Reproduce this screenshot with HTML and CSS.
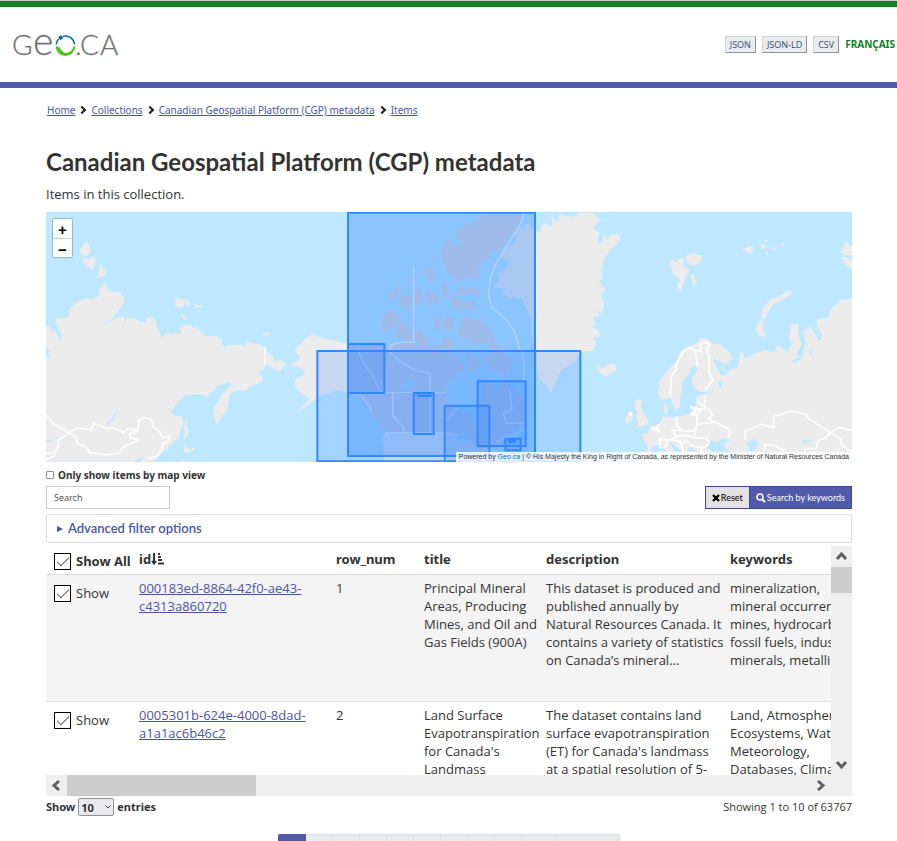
FILE: index.html
```html
<!DOCTYPE html>
<html lang="en">
<head>
<meta charset="utf-8">
<meta name="viewport" content="width=device-width, initial-scale=1">
<title>Canadian Geospatial Platform (CGP) metadata</title>
<link rel="stylesheet" href="styles.css">
</head>
<body>
<header class="banner">
  <a class="logo" href="#" aria-label="GEO.CA">
    <svg width="112" height="60" viewBox="0 -19 112 60">
      <g class="logo-text">
        <text x="-1" y="21" font-size="28">G</text>
        <text x="20" y="21" font-size="39">e</text>
        <text x="62" y="21" font-size="28">.</text>
        <text x="67" y="21" font-size="28">C</text>
        <text x="87" y="21" font-size="28">A</text>
      </g>
      <path d="M43.300 10.500A9.300 9.300 0 0 1 45.500 5M50 2.300A9.300 9.300 0 0 1 61.600 10.500" fill="none" stroke="#0b67a8" stroke-width="1.500"/>
      <circle cx="47.700" cy="3.700" r="2.100" fill="#0b67a8"/>
      <path d="M42.700 12A9.600 9.600 0 0 0 62.200 12.500L60.500 12.300A8 8 0 0 1 52 19Q48.500 17.500 46.500 13.500Z" fill="#4cc21f"/>
    </svg>
  </a>
  <nav class="formats" aria-label="Formats">
    <a class="format" href="#">JSON</a>
    <a class="format" href="#">JSON-LD</a>
    <a class="format" href="#">CSV</a>
    <a class="lang" href="#">FRANÇAIS</a>
  </nav>
</header>

<main class="page">
  <nav aria-label="Breadcrumb">
    <ol class="crumbs">
      <li><a href="#">Home</a></li>
      <li><a href="#">Collections</a></li>
      <li><a href="#">Canadian Geospatial Platform (CGP) metadata</a></li>
      <li><a href="#">Items</a></li>
    </ol>
  </nav>
  <h1>Canadian Geospatial Platform (CGP) metadata</h1>
  <p class="intro">Items in this collection.</p>

  <section class="map" aria-label="Map">
    <svg class="map-art" viewBox="0 0 806 250" preserveAspectRatio="xMidYMid slice">
      <!-- Siberia and the north Pacific -->
      <g transform="translate(0 -2) scale(.33333)">
        <path class="land" d="M0 345L12 350 16 362 26 364 36 377 42 392 47 388 46 368 36 358 40 347 29 340 28 327 62 322 71 318 68 300 80 287 103 271 126 264 135 269 160 257 158 242 166 226 176 219 185 229 182 237 195 246 223 248 235 266 230 287 208 314 184 342 208 324 234 318 236 342 240 324 266 325 282 335 301 338 299 325 315 322 330 331 333 352 346 381 354 379 356 368 381 372 392 367 400 373 408 364 400 356 411 345 434 345 437 354 455 352 470 372 480 379 508 377 526 387 530 404 539 419 541 406 586 405 601 414 600 397 640 404 656 415 677 437 689 454 707 450 718 462 700 485 678 473 659 461 652 481 633 486 651 501 650 515 614 529 597 542 580 540 557 545 548 561 549 575 545 597 521 629 511 646 503 616 505 588 517 572 532 548 558 522 548 514 530 524 516 527 502 540 492 558 458 553 418 556 396 577 374 606 386 617 408 619 410 645 401 677 370 710 348 730 322 755 0 755Z"/>
        <path class="land" d="M122 94L132 107 132 128 121 137 104 130 101 119 109 109ZM147 144L149 160 141 180 126 170 113 156 110 143 128 148 138 139ZM166 166L171 177 182 184 177 196 149 208 158 184 161 167ZM96 142L107 146 103 151ZM388 266L400 263 405 270 417 266 418 282 404 295 388 289ZM422 268L434 279 426 289 419 281ZM444 282L468 289 459 294 447 290ZM405 311L416 317 425 328 412 326ZM650 374L664 366 671 373 654 377ZM226 304L233 307 228 310ZM418 627L424 630 422 644 429 666 416 691 414 656ZM413 708L435 718 430 728 415 725ZM406 744L415 755H404Z"/>
        <path class="water" d="M211 599L213 606 203 630 183 645 178 641 196 630ZM0 412L9 421 8 432 15 438 6 440 0 430ZM0 690L21 690 18 694 0 695ZM284 742L293 745 282 755H260Z"/>
        <path class="border" d="M0 615L21 641 71 668 95 653 136 660 143 640 186 656 199 652 233 668 247 656 277 661 278 633 293 623 316 628 321 649 343 667 349 684 372 678 365 695 350 702 347 719 333 737 306 748M277 661L249 672 256 684 277 690 229 713 220 729 183 735 129 727 124 713 95 701 92 685 71 668 36 692 38 705 25 727 0 730M25 727L26 738 0 748"/>
        <path class="thin" d="M657 410V464M438 722l6-10"/>
      </g>
      <!-- Alaska, Canada, Greenland -->
      <g transform="translate(264 -2) scale(.33333)">
        <path class="land" d="M114 402L82 394 44 386 6 373-18 386-27 402-46 415-39 434-27 441-42 457-54 460-52 468-26 473-14 489-24 500-44 508-44 530-24 550 0 566-24 590-42 604-18 594 12 569 30 557 60 548 82 540 114 548Z"/>
        <path class="canada" d="M114 402L170 410 215 402 241 410 265 403 312 397 330 413 365 408 395 402 402 430 430 429 448 444 466 468 456 488 432 504 420 520 408 540 412 580 440 600 475 610 490 645 507 658 511 630 502 590 516 555 514 520 530 512 565 530 590 514 615 542 647 570 647 605 634 645 600 665 570 700 530 720 450 690 408 670 232 668 206 640 175 600 150 562 114 548Z"/>
        <path class="states" d="M228 668L408 670 455 678 485 692 500 712 545 715 560 738 540 755H222L220 712 214 680Z"/>
        <path class="canada" d="M440 66L470 38 492 47 508 20 530 8H642L610 70 583 103 568 120 550 128 530 148 518 150 512 170 500 180 512 190 500 208 480 200 470 212 452 205 440 218 430 200 412 190 408 170 398 160 399 142 390 128 400 118 400 95 425 92 440 104 455 104 448 88 430 78ZM345 165L371 182 368 190 380 205 366 215 350 212 356 196 338 190ZM296 205L306 220 286 226ZM265 225L278 236 262 246 268 256 240 275 230 262 244 244ZM282 248L305 258 308 272 298 300 282 285 264 289 268 270ZM310 246L334 230 330 246 344 272 318 290ZM350 243L387 249 384 262 390 284 368 280 358 290 347 262ZM391 205L414 230 416 248 410 266 396 250ZM446 228L470 236 498 232 512 246 503 258 480 250 460 256 443 250ZM430 240L440 262 448 275 474 278 498 270 500 299 462 296 432 300 422 290 426 262ZM223 303L246 304 270 315 266 339 250 350 232 370 222 360 210 358 218 330ZM258 350L279 333 298 347 300 360 330 355 340 375 367 386 352 400 340 414 322 396 302 390 290 398 280 380 260 385ZM369 320L380 322 392 315 399 340 388 348 390 366 376 358ZM407 318L430 320 432 345 424 366 414 356 404 366 402 340ZM376 136l8 8-8 8-6-6Z"/>
        <path class="canada" d="M447 329L468 318 480 322 490 330 518 322 520 340 543 356 536 370 553 372 553 403 572 408 580 420 596 438 616 458 600 462 610 482 588 476 594 504 570 496 560 484 536 471 528 452 505 445 520 436 550 430 540 410 523 396 500 404 481 395 470 380 456 388 442 376 450 352ZM400 380L416 382 436 398 428 410 415 422 394 408ZM466 425L486 432 500 435 520 466 500 470 486 490 470 462Z"/>
        <path class="land" d="M657 38L665 55 690 66 700 38 727 50 724 15 742 38 749 12 785 20 850 8V423L811 425 795 455 752 480 740 512 725 548 709 528 690 510 680 470 682 430 665 385 663 326 650 300 638 268 592 260 570 248 586 238 549 229 568 214 560 190 580 186 601 153 580 150 570 137 584 111 614 100 620 60Z"/>
        <path class="thin" d="M641 8Q642 30 612 73L580 125Q520 210 543 290L588 327Q623 370 624 407L640 435Q644 470 641 515M311 170V397H268L241 405V430L290 467 318 482 360 490V665M114 548H408M143 416L155 449 185 492 207 538 217 546M248 549V617L280 650 283 666M153 557L180 590 183 608M226 668H408L454 678 486 700M599 542L606 598 580 610 590 640H641M410 628L441 593M560 700L580 685 620 675 640 650"/>
        <path class="cutout" d="M270 530L300 508 319 520 286 540ZM220 447L238 440 249 450 224 460ZM432 680L463 668 485 683 470 695 454 685 449 695Z"/>
      </g>
      <!-- Greenland coast, Europe, western Russia -->
      <g transform="translate(534 -2) scale(.33333)">
        <path class="land" d="M-4 8L38 8 60 31 42 49 9 54 17 62 47 60 58 70 51 106 67 92 71 70 79 90 96 71 119 76 122 90 87 126 72 146 66 184 68 204 57 216 79 239 62 252 73 282 67 310 50 302 60 318 25 323 51 342 24 348 55 360 60 381 17 381 51 396 40 412 14 423-4 425Z"/>
        <path class="land" d="M51 461L62 466 57 478 71 471 91 460 108 462 109 480 78 500 60 491 52 477ZM266 152L283 149 287 160 300 143 312 147 308 168 331 180 316 200 304 246 290 225 301 209 278 190ZM316 137L343 129 367 137 361 157 342 168 322 158ZM339 192L351 218 340 227 331 199ZM487 122L501 109 517 108 522 120 510 131 501 122ZM553 85L563 92 555 97ZM544 100L563 109 554 118 542 110ZM577 112L590 116 578 124ZM600 106L609 96 611 110ZM560 121L566 135 556 132ZM531 132l8-3-2 6ZM632 240L634 252 609 269 590 280 571 292 557 325 543 326 545 304 560 280 575 264 596 261 620 244ZM539 329L553 335 548 355 558 381 537 379 527 357ZM798 95L816 112V136H790L781 126ZM779 142L795 140 816 150V180L800 168ZM164 575L174 568 187 571 182 591 190 610 205 629 204 644 170 654 174 636 166 614 176 609 164 596ZM143 612L157 607 157 632 137 641 134 628ZM251 585L261 580 265 608 253 608Z"/>
        <path class="land" d="M234 516L265 480 290 452 303 422 326 407 351 400 364 382 388 390 398 402 420 403 451 428 458 447 438 462 408 450 414 469 430 473 438 489 454 477 474 472 480 427 491 430 493 448 519 432 552 422 583 426 594 404 622 425 635 403 627 379 634 340 655 342 655 370 665 406 651 426 657 443 637 450 640 459 658 454 671 430 673 401 691 412 690 432 696 437 694 420 676 396 669 364 688 351 707 373 714 391 724 391 727 374 712 351 710 330 750 320 749 300 783 270 816 264V755H150L205 717 188 680 175 674 201 672 209 653 239 641 251 618 277 622 327 614 347 587 350 558 400 545 362 546 337 531 335 505 350 486 350 467 331 474 328 490 307 515 307 541 300 560 300 591 285 601 271 563 243 571 232 550 240 530Z"/>
        <path class="water" d="M398 440L419 462 427 479 443 490 424 497 415 483 407 462ZM413 513L429 520 419 537ZM395 536L406 540 400 545ZM380 714L391 692 412 697 424 686 449 690 430 705 436 718 458 725H398ZM498 697L524 687 535 700 526 720 512 724ZM666 690L709 692 681 698 668 702ZM216 710L234 704 260 725H210ZM267 695L289 710 307 725H286ZM320 722l12-10 22 13Z"/>
        <path class="border" d="M271 561L274 500 287 481 288 462 310 425 330 413 346 422 352 470M346 422L362 422 361 402 378 397 392 404 380 416 388 440 387 488 398 510 374 541M374 557L373 590 355 577M332 614L350 600 332 590 360 598 382 593 398 614 386 628 405 636 352 643 350 614 332 614M350 614L368 595M405 636L452 661 444 686M352 643L340 663 306 662 291 646 289 620M306 662L276 660 288 680 319 676 342 683 380 684 388 700 372 713 336 708 318 690 308 700 285 690 248 690 238 685 240 713M352 643L342 683M213 650L240 666 229 650 243 640M300 690L310 725M360 708L365 725M288 680L262 692 255 714M497 690L495 664 543 643 582 652 580 620 636 603 680 613 688 627 717 646 752 668 775 652 816 661M752 668L737 683 712 693 711 714 681 717 672 725M752 668L780 686 785 705 816 725M552 725L555 704 582 706 614 722"/>
        <circle cx="152" cy="612" r="7" fill="#fff"/>
      </g>
      <!-- Item extents -->
      <g transform="translate(264 -2) scale(.33333)" class="extents">
        <rect class="double" x="114" y="8" width="561" height="730"/>
        <rect x="22" y="423" width="789" height="331"/>
        <rect x="114" y="402" width="109" height="147"/>
        <rect x="311" y="549" width="60" height="123"/>
        <rect x="326" y="550" width="36" height="8"/>
        <rect x="404" y="587" width="134" height="180"/>
        <rect x="503" y="514" width="144" height="194"/>
        <rect x="586" y="686" width="46" height="35"/>
        <rect x="598" y="689" width="17" height="8"/>
      </g>
    </svg>
    <div class="zoom">
      <button type="button" aria-label="Zoom in">+</button>
      <button type="button" aria-label="Zoom out">−</button>
    </div>
    <p class="credit">Powered by <a href="#">Geo.ca</a> | © His Majesty the King in Right of Canada, as represented by the Minister of Natural Resources Canada</p>
  </section>

  <label class="only-map"><input type="checkbox"> Only show items by map view</label>
  <form class="search">
    <input type="text" placeholder="Search" aria-label="Search">
    <div class="actions">
      <button class="reset" type="reset"><svg width="8" height="8" viewBox="0 0 8 8"><path d="M1 1L7 7M7 1L1 7" stroke="#000" stroke-width="2.400"/></svg>Reset</button>
      <button class="submit" type="button"><svg width="10" height="10" viewBox="0 0 10 10" fill="none" stroke="#fff"><circle cx="4" cy="4" r="3" stroke-width="1.500"/><path d="M6 6L9 9" stroke-width="2"/></svg>Search by keywords</button>
    </div>
  </form>
  <details class="filters"><summary>Advanced filter options</summary></details>

  <section class="scroller">
    <div class="view">
      <table>
        <colgroup><col class="c-show"><col class="c-id"><col class="c-row"><col class="c-title"><col class="c-desc"><col class="c-key"></colgroup>
        <thead>
          <tr>
            <th><label class="pick"><input type="checkbox" checked>Show All</label></th>
            <th>id<svg class="sort" width="13" height="12" viewBox="0 0 13 12"><path d="M3 0V10M1 8L3 10.500 5 8" fill="none" stroke="#333" stroke-width="2"/><path d="M7 1h2M7 4h3M7 7h4M7 10.500h6" stroke="#333" stroke-width="2"/></svg></th>
            <th>row_num</th><th>title</th><th>description</th><th>keywords</th>
          </tr>
        </thead>
        <tbody>
          <tr>
            <td><label class="pick"><input type="checkbox" checked>Show</label></td>
            <td><a href="#">000183ed-8864-42f0-ae43-c4313a860720</a></td>
            <td>1</td>
            <td>Principal Mineral Areas, Producing Mines, and Oil and Gas Fields (900A)</td>
            <td class="desc">This dataset is produced and<br>published annually by<br>Natural Resources Canada. It<br>contains a variety of statistics<br>on Canada’s mineral...</td>
            <td>mineralization,<br>mineral occurrences,<br>mines, hydrocarbons,<br>fossil fuels, industrial<br>minerals, metallic</td>
          </tr>
          <tr>
            <td><label class="pick"><input type="checkbox" checked>Show</label></td>
            <td><a href="#">0005301b-624e-4000-8dad-a1a1ac6b46c2</a></td>
            <td>2</td>
            <td>Land Surface Evapotranspiration for Canada's Landmass</td>
            <td class="desc">The dataset contains land<br>surface evapotranspiration<br>(ET) for Canada's landmass<br>at a spatial resolution of 5-</td>
            <td>Land, Atmosphere,<br>Ecosystems, Water,<br>Meteorology,<br>Databases, Climate</td>
          </tr>
        </tbody>
      </table>
    </div>
    <div class="bar-v">
      <svg width="21" height="21" viewBox="0 0 21 21"><path d="M6 13L10.500 8 15 13"/></svg>
      <span class="thumb-v"></span>
      <svg class="end-v" width="21" height="21" viewBox="0 0 21 21"><path d="M6 8L10.500 13 15 8"/></svg>
    </div>
    <div class="bar-h">
      <svg width="21" height="21" viewBox="0 0 21 21"><path d="M13 6L8 10.500 13 15"/></svg>
      <span class="thumb-h"></span>
      <svg class="end-h" width="21" height="21" viewBox="0 0 21 21"><path d="M8 6L13 10.500 8 15"/></svg>
    </div>
  </section>

  <div class="table-foot">
    <label class="length">Show
      <span class="select"><select><option>10</option><option>25</option><option>50</option></select><svg width="6" height="4" viewBox="0 0 6 4"><path d="M.5.5L3 3 5.500.5" fill="none" stroke="#444"/></svg></span>
      entries</label>
    <span class="count">Showing 1 to 10 of 63767</span>
  </div>

  <nav class="pager" aria-label="Pages">
    <a class="current" href="#">1</a><a href="#">2</a><a href="#">3</a><a href="#">4</a><a href="#">5</a><a href="#">6</a><a href="#">7</a><a href="#">8</a><a href="#">9</a><a class="ten" href="#">10</a><a class="next" href="#">Next</a>
  </nav>
</main>
</body>
</html>
```
FILE: styles.css
```css
* { box-sizing: border-box; }

body {
  margin: 0;
  background: #fff;
  color: #333;
  font: 13px/18px "Noto Sans", sans-serif;
}

a { color: #4c55a5; }
button, input, select { font-family: inherit; color: inherit; margin: 0; }

.banner {
  display: flex;
  justify-content: space-between;
  align-items: center;
  height: 88px;
  padding: 0 2px 0 13px;
  border-bottom: 6px solid #5059aa;
  background: linear-gradient(#ccc 1px, #127f26 1px, #127f26 7px, #fff 7px);
}
.logo { display: block; margin-top: 8px; }
.logo svg { display: block; }
.logo-text {
  font-family: Lato, sans-serif;
  font-weight: 300;
  fill: #6f7376;
  stroke: #6f7376;
  stroke-width: .3;
}

.formats { display: flex; align-items: center; gap: 6px; margin-top: 6px; }
.format {
  padding: 0 4px;
  border: 1px solid #d3d5d9;
  border-right-color: #8e9095;
  border-bottom-color: #8e9095;
  background: #eaebed;
  color: #335075;
  font: 9px/15px "Open Sans", sans-serif;
  text-decoration: none;
}
.lang { color: #127f26; font-size: 10px; font-weight: 700; line-height: 20px; text-decoration: none; }

.page { padding: 13px 45px 0 46px; }

.crumbs {
  display: flex;
  margin: 0;
  padding: 0 1px;
  list-style: none;
  font-size: 10px;
}
.crumbs li { display: flex; align-items: center; }
.crumbs li + li::before {
  content: "";
  width: 4px;
  height: 4px;
  margin: 0 6px 0 4px;
  border: solid #222;
  border-width: 2px 2px 0 0;
  transform: rotate(45deg);
}

h1 {
  margin: 28px 0 0;
  font: 700 24px/30px Lato, sans-serif;
}
.intro { margin: 8px 0 9px; font-family: "Open Sans", sans-serif; }

.map { position: relative; height: 250px; overflow: hidden; background: #bee8ff; }
.map-art { display: block; width: 100%; height: 100%; }
.land { fill: #ececec; }
.canada { fill: #dcd8df; }
.states { fill: #ececf0; }
.water { fill: #bee8ff; }
.cutout { fill: #bee8ff; }
.border { fill: none; stroke: #fff; stroke-width: 5; stroke-linejoin: round; }
.thin { fill: none; stroke: #fff; stroke-width: 4; }
.extents { fill: #38f; fill-opacity: .2; stroke: #38f; stroke-width: 6; stroke-linejoin: round; }
.double { fill-opacity: .36; }
.zoom {
  position: absolute;
  top: 6px;
  left: 6px;
  width: 21px;
  border: 1px solid #96b9cd;
  border-radius: 2px;
  background: #fff;
}
.zoom button {
  display: block;
  width: 100%;
  height: 19px;
  padding: 0;
  border: 0;
  background: none;
  color: #000;
  font: 700 15px/21px "Liberation Sans", sans-serif;
}
.zoom button + button { border-top: 1px solid #ccc; }
.credit {
  position: absolute;
  right: 0;
  bottom: 0;
  margin: 0;
  padding: 0 3px;
  background: rgba(255, 255, 255, .8);
  font: 7px/10px "Liberation Sans", sans-serif;
}
.credit a { color: #0078a8; text-decoration: none; }

.only-map {
  display: flex;
  align-items: center;
  gap: 4px;
  height: 18px;
  margin: 4px 0 2px;
  font-size: 10px;
  font-weight: 700;
}
.only-map input {
  appearance: none;
  width: 8px;
  height: 8px;
  border: 1px solid #8f8f9d;
  border-radius: 1px;
}

.search { display: flex; justify-content: space-between; }
.search input {
  width: 124px;
  height: 23px;
  padding: 0 7px;
  border: 1px solid #ccc;
  font-size: 9px;
}
.search input::placeholder { color: #555; opacity: 1; }
.actions { display: flex; }
.actions button {
  display: flex;
  align-items: center;
  gap: 1px;
  height: 23px;
  padding: 0 6px;
  border: 1px solid #40488f;
  font: 9px/14px Lato, sans-serif;
}
.actions .reset { background: #e2e2e2; color: #000; }
.actions .submit { border-left: 0; background: #5059aa; color: #fff; }

.filters {
  margin: 5px 0 3px;
  padding: 0 10px;
  border: 1px solid #ddd;
  border-radius: 2px;
}
.filters summary {
  display: flex;
  align-items: center;
  gap: 5px;
  color: #4c55a5;
  font: 600 13px/27px Lato, sans-serif;
}
.filters summary::before {
  content: "";
  border: solid transparent;
  border-width: 3px 0 3px 6px;
  border-left-color: #4c55a5;
}

.scroller { display: grid; grid-template: 229px 21px / minmax(0, 1fr) 21px; }
.view { overflow: hidden; }
table { width: 870px; border-collapse: collapse; table-layout: fixed; }
.c-show { width: 85px; }
.c-id { width: 197px; }
.c-row { width: 88px; }
.c-title { width: 122px; }
.c-desc { width: 184px; }
th, td { padding: 4px 0 4px 8px; text-align: left; vertical-align: top; }
th { height: 28px; white-space: nowrap; }
td { height: 127px; border-top: 1px solid #ddd; font-family: "Open Sans", sans-serif; }
.desc { white-space: nowrap; }
tbody tr:first-child { background: #f4f4f4; }
.sort { vertical-align: -1px; }
.pick { display: flex; align-items: center; gap: 5px; padding-top: 5px; white-space: nowrap; }
th .pick { padding-top: 2px; }
.pick input {
  appearance: none;
  flex: none;
  display: grid;
  place-items: center;
  width: 17px;
  height: 17px;
  border: 1px solid #000;
  background: #fff;
}
.pick input:checked::before {
  content: "";
  width: 5px;
  height: 11px;
  margin-bottom: 4px;
  border: solid #555;
  border-width: 0 1px 1px 0;
  transform: rotate(45deg);
}

.bar-v, .bar-h { display: flex; background: #efefef; }
.bar-v { flex-direction: column; }
.bar-h { grid-column: 1 / 3; padding-right: 21px; }
.bar-v svg, .bar-h svg { flex: none; fill: none; stroke: #606060; stroke-width: 3; }
.thumb-v { height: 26px; background: #cdcdcd; }
.thumb-h { width: 189px; background: #cdcdcd; }
.end-v { margin-top: auto; }
.end-h { margin-left: auto; }

.table-foot {
  display: flex;
  justify-content: space-between;
  align-items: center;
  height: 22px;
  font-size: 11px;
}
.count { font-family: "Open Sans", sans-serif; }
.length { display: flex; align-items: center; gap: 3px; font-weight: 700; }
.select { display: grid; align-items: center; }
.select select, .select svg { grid-area: 1 / 1; }
.select svg { justify-self: end; margin-right: 3px; }
.select select {
  appearance: none;
  width: 36px;
  height: 18px;
  padding: 0 2px;
  border: 1px solid #8f8f9d;
  border-radius: 2px;
  background: #e9e9ed;
  font-size: 11px;
  font-weight: 700;
}

.pager { display: flex; justify-content: center; margin-top: 16px; }
.pager a {
  flex: none;
  width: 27px;
  padding: 8px 0;
  border: solid #dcdee1;
  border-width: 1px 1px 1px 0;
  background: #eaebed;
  font-size: 11px;
  text-align: center;
  text-decoration: none;
}
.pager .current { width: 28px; border-color: #5059aa; border-radius: 2px 0 0 2px; background: #5059aa; color: #fff; }
.pager .ten { width: 35px; }
.pager .next { width: 63px; border-radius: 0 2px 2px 0; }
```
